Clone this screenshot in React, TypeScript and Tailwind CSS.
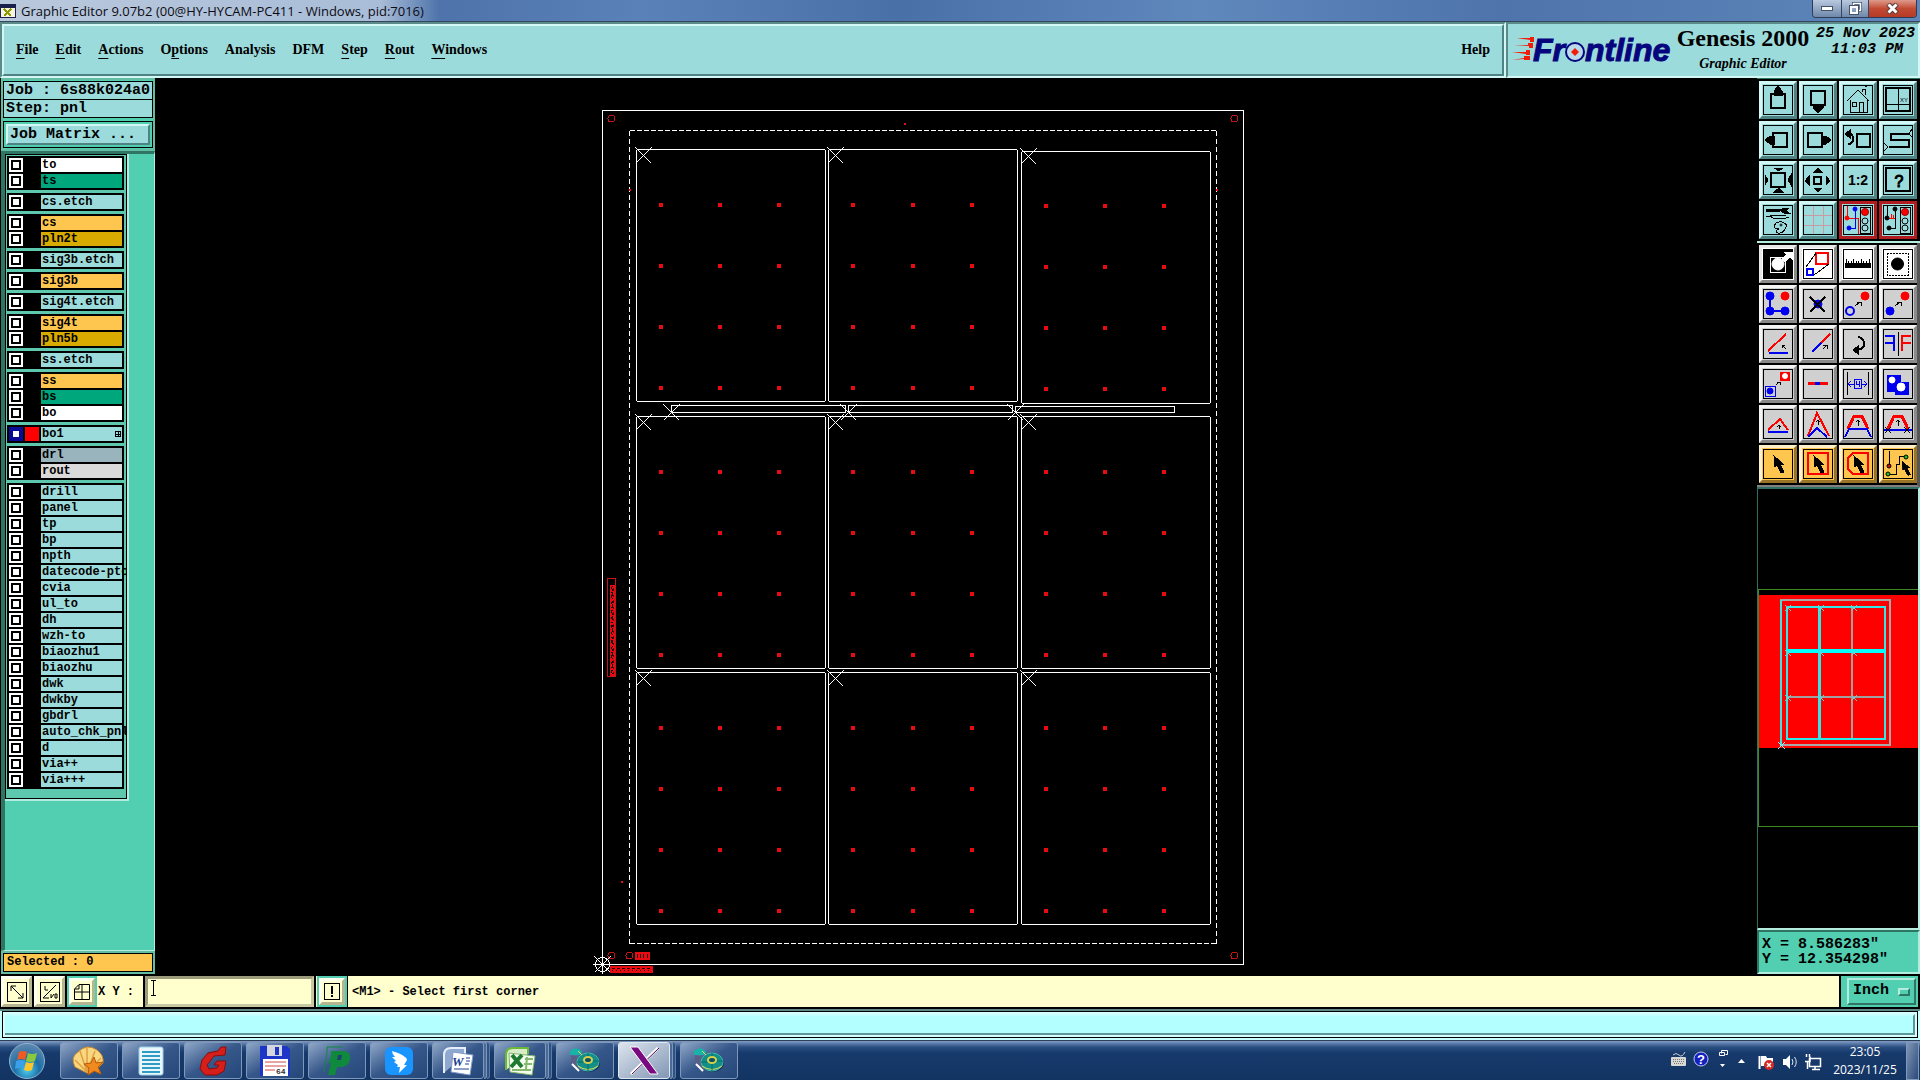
import type { ReactNode } from "react";

type Layer = { name: string; color: string; active?: boolean };

const aqua = "bg-[#9cdbdb]";
const amber = "bg-[#ffc64f]";
const gold = "bg-[#d9ab00]";
const green = "bg-[#00a67c]";

const groups: Layer[][] = [
  [{ name: "to", color: "bg-white" }, { name: "ts", color: green }],
  [{ name: "cs.etch", color: aqua }],
  [{ name: "cs", color: amber }, { name: "pln2t", color: gold }],
  [{ name: "sig3b.etch", color: aqua }],
  [{ name: "sig3b", color: amber }],
  [{ name: "sig4t.etch", color: aqua }],
  [{ name: "sig4t", color: amber }, { name: "pln5b", color: gold }],
  [{ name: "ss.etch", color: aqua }],
  [{ name: "ss", color: amber }, { name: "bs", color: green }, { name: "bo", color: "bg-white" }],
  [{ name: "bo1", color: aqua, active: true }],
  [{ name: "drl", color: "bg-[#9ab4be]" }, { name: "rout", color: "bg-[#dadada]" }],
  [
    "drill", "panel", "tp", "bp", "npth", "datecode-pto", "cvia", "ul_to", "dh", "wzh-to", "biaozhu1",
    "biaozhu", "dwk", "dwkby", "gbdrl", "auto_chk_pnl", "d", "via++", "via+++",
  ].map((name) => ({ name, color: aqua })),
];

// [before, underlined, after]
const menus = [
  ["", "F", "ile"], ["", "E", "dit"], ["", "A", "ctions"], ["O", "p", "tions"], ["Analysis", "", ""],
  ["DFM", "", ""], ["", "S", "tep"], ["", "R", "out"], ["", "W", "indows"],
];

const mono = "font-['Liberation_Mono',monospace] font-bold";
const serif = "font-['Liberation_Serif',serif] font-bold";
const raised = "border-t-[#d3f7f4] border-l-[#d3f7f4] border-b-[#4f8283] border-r-[#4f8283]";
const sunken = "border-t-[#5b8a8a] border-l-[#5b8a8a] border-b-[#d3f7f4] border-r-[#d3f7f4]";

const TitleBar = () => (
  <div className="h-[22px] shrink-0 flex items-center border-b border-[#33465c] bg-[linear-gradient(90deg,#b9c8dc_0,#a9bdd8_380px,#4d73aa_440px,#5b82b8_640px,#4a70a8_900px,#5f88bd_1200px,#4e74ab_1500px,#5f87bb_100%)]">
    <svg width="16" height="16" viewBox="0 0 16 16" shapeRendering="crispEdges">
      <rect x="0" y="1" width="16" height="14" fill="#1b1f4b" />
      <rect x="1" y="5" width="14" height="9" fill="#f4f4e0" />
      <path d="M4 6l7 7M11 6l-7 7" stroke="#8f9a00" strokeWidth="2" />
    </svg>
    <h1 className="ml-[5px] flex-1 text-[13px] leading-[20px] text-[#0c0c14] font-['Open_Sans',sans-serif]">
      Graphic Editor 9.07b2 (00@HY-HYCAM-PC411 - Windows, pid:7016)
    </h1>
    <div className="mr-[3px] self-start flex h-[18px] rounded-b border border-t-0 border-[#2c3c55] overflow-hidden">
      <button aria-label="Minimize" className="w-[29px] flex justify-center items-center border-r border-[#33455f] bg-linear-to-b from-[#b9c9de] to-[#7088aa]">
        <svg width="13" height="6"><rect x=".5" y=".5" width="11" height="4" fill="#fff" stroke="#42526b" /></svg>
      </button>
      <button aria-label="Restore" className="w-[27px] flex justify-center items-center border-r border-[#33455f] bg-linear-to-b from-[#b9c9de] to-[#7088aa]">
        <svg width="13" height="13" fill="none">
          <path d="M4.5 4V1.500h7v7H9" stroke="#42526b" strokeWidth="3" />
          <path d="M4.500 4V1.500h7v7H9" stroke="#fff" strokeWidth="1.500" />
          <rect x="1.500" y="4.500" width="7" height="7" stroke="#42526b" strokeWidth="3" />
          <rect x="2" y="5" width="6" height="6" stroke="#fff" strokeWidth="2" />
        </svg>
      </button>
      <button aria-label="Close" className="w-[47px] flex justify-center items-center bg-linear-to-b from-[#dd9a8c] via-[#c24a33] to-[#b63a26]">
        <svg width="13" height="11">
          <path d="M2 1l9 9M11 1l-9 9" stroke="#5b3a3a" strokeWidth="5" />
          <path d="M2.500 1.500l8 8M10.500 1.500l-8 8" stroke="#fff" strokeWidth="3" />
        </svg>
      </button>
    </div>
  </div>
);

const FrontlineLogo = () => (
  <svg width="163" height="42" viewBox="0 -6 163 42" role="img" aria-label="Frontline">
    <path
      fill="#f21c08"
      d="M5 2h13v-1h4v5h-4v-2zM2 9h14v-2h5v5h-4v-2zM0 16h14v-2h4v5h-4v-1zM0 24l12-2v-2h6v4h-6v-1z"
    />
    <g fontFamily="Liberation Sans" fontWeight="bold" fontStyle="italic" fontSize="32" fill="#06057e" stroke="#06057e">
      <text x="21" y="25">Fr</text>
      <text x="73" y="25">ntline</text>
    </g>
    <circle cx="63" cy="16" r="9" fill="#b9dbe9" stroke="#06057e" strokeWidth="2" />
    <path d="M63 12l4 4-4 4-4-4z" fill="#f21c08" />
  </svg>
);

const Header = () => (
  <header className="h-[56px] shrink-0 flex">
    <div className={`flex-1 flex border-2 ${sunken}`}>
      <nav className={`flex-1 flex items-center justify-between pl-[12px] pr-[12px] pb-[2px] bg-[#9cdbdb] border-2 text-[14px] ${serif} ${raised}`}>
        <div className="flex gap-[17px]">
          {menus.map(([a, u, b]) => (
            <button key={a + u + b}>
              {a}
              <span className="underline underline-offset-4">{u}</span>
              {b}
            </button>
          ))}
        </div>
        <button>Help</button>
      </nav>
    </div>
    <div className={`w-[414px] flex bg-[#9cdbdb] border-2 ${sunken}`}>
      <div className="pl-[4px] pt-[6px]"><FrontlineLogo /></div>
      <div className={`w-[136px] text-center whitespace-nowrap ${serif}`}>
        <div className="text-[24px] leading-[28px]">Genesis 2000</div>
        <div className="text-[14px] leading-[24px] italic">Graphic Editor</div>
      </div>
      <div className={`ml-[5px] text-[15px] leading-[16px] pt-[2px] italic text-right whitespace-nowrap ${mono}`}>
        <div>25 Nov 2023</div>
        <div className="pr-[12px]">11:03 PM</div>
      </div>
    </div>
  </header>
);

const LayerRow = ({ name, color, active }: Layer) => (
  <div className="flex h-[14px]">
    <input
      id={name}
      type="checkbox"
      className={
        active
          ? "appearance-none shrink-0 size-[14px] bg-white border-2 border-[#0a0a96] shadow-[inset_0_0_0_2px_#0a0a96]"
          : "appearance-none shrink-0 size-[14px] bg-white border-2 border-white shadow-[inset_0_0_0_2px_#000]"
      }
    />
    <span className={active ? "w-[14px] mx-[2px] bg-[#f00]" : "w-[14px] mx-[2px] bg-black"} />
    <label htmlFor={name} className={`flex-1 min-w-0 flex items-center justify-between pl-px whitespace-nowrap text-[12px] leading-[14px] ${mono} ${color}`}>
      {name}
      {active && (
        <svg width="6" height="6" className="mr-px shrink-0" shapeRendering="crispEdges">
          <path d="M0 .5h6M0 3h6M0 5.500h6M.5 0v6M3 0v6M5.500 0v6" stroke="#000" />
        </svg>
      )}
    </label>
  </div>
);

const LeftPanel = () => (
  <aside className="w-[155px] shrink-0 flex flex-col bg-[#52ceb0] border-l border-black mb-[2px]">
    <div className="border-2 border-[#62bda3] py-px">
      <div className={`text-[15px] ${mono}`}>
        <div className="h-[19px] leading-[18px] pl-[2px] border border-black bg-[#9cdbdb] whitespace-nowrap">Job : 6s88k024a0</div>
        <div className="h-[18px] leading-[18px] pl-[2px] border border-t-0 border-black bg-[#9cdbdb]">Step: pnl</div>
        <div className="mt-[3px] p-[2px] border border-black">
          <button className={`block w-full h-[21px] leading-[17px] pl-[2px] text-left border-2 bg-[#9cdbdb] ${raised}`}>Job Matrix ...</button>
        </div>
      </div>
    </div>
    <div className="flex-1 border-t-3 border-t-[#2f7563] border-l-4 border-l-[#2f7563] border-r border-r-[#b4ede0] border-b border-b-[#b4ede0]">
      <div className="w-[124px] border-r-2 border-b-2 border-[#b4ede0]">
        <div className="border border-black p-px pb-[9px] flex flex-col gap-[3px] bg-[#5dc8ad] overflow-hidden">
          {groups.map((group) => (
            <div key={group[0].name} className="w-[117px] p-[2px] bg-black flex flex-col gap-[2px]">
              {group.map((layer) => (
                <LayerRow key={layer.name} {...layer} />
              ))}
            </div>
          ))}
        </div>
      </div>
    </div>
    <div className="border-2 border-[#62bda3]">
      <div className={`h-[19px] leading-[17px] pl-[3px] text-[12px] border border-black bg-[#ffc64f] ${mono}`}>Selected : 0</div>
    </div>
  </aside>
);

// Board geometry
const columns = [
  { x: 636.5, cross: 643.5, dots: [661, 720, 779] },
  { x: 828.5, cross: 835.5, dots: [853, 913, 972] },
  { x: 1021.5, cross: 1028.5, dots: [1046, 1105, 1164] },
];
const rows = [
  { y: 149.5, cross: 155.5, dots: 205 },
  { y: 416.5, cross: 422.5, dots: 472 },
  { y: 672.5, cross: 678.5, dots: 728 },
];
const strips = [
  { x: 671.5, y: 405.5, w: 174, h: 7 },
  { x: 848.5, y: 405.5, w: 164, h: 7 },
  { x: 1015.5, y: 406.5, w: 159, h: 6 },
];

const Cross = ({ x, y }: { x: number; y: number }) => (
  <path d={`M${x - 8} ${y - 8}l16 16m0 -16l-16 16`} stroke="#fff" />
);

const Board = () => (
  <svg className="flex-1 min-w-0 bg-black" viewBox="155 78 1602 898" shapeRendering="crispEdges" fill="none">
    <rect x="602.5" y="110.5" width="641" height="854" stroke="#fff" />
    <path d="M629.5 130.500H1216.500M629.500 943.500H1216.500" stroke="#fff" strokeDasharray="5 2" />
    <path d="M629.5 130.500V943.500M1216.500 130.500V943.500" stroke="#fff" strokeDasharray="5 3" />
    {rows.map((row, r) =>
      columns.map((col, c) => {
        const dy = r === 0 && c === 2 ? 2 : 0;
        return (
          <g key={`${r}-${c}`}>
            <rect x={col.x} y={row.y + dy} width="189" height="252" rx="2" stroke="#fff" />
            <Cross x={col.cross} y={row.cross + dy / 2} />
            {col.dots.map((x) =>
              [0, 61, 122, 183].map((d) => (
                <rect key={`${x}-${d}`} x={x - 2} y={row.dots + d - 2 + dy / 2} width="4" height="4" fill="#e80c12" />
              ))
            )}
          </g>
        );
      })
    )}
    {strips.map((s) => (
      <g key={s.x}>
        <rect x={s.x} y={s.y} width={s.w} height={s.h} stroke="#fff" />
        <Cross x={s.x} y={412.5} />
      </g>
    ))}
    <g stroke="#c81414">
      {[[611.5, 118.500], [1234.500, 118.500], [611.500, 955.500], [629.500, 955.500], [1234.500, 955.500]].map(([x, y]) => (
        <circle key={`${x}-${y}`} cx={x} cy={y} r="3.5" />
      ))}
      <rect x="607.5" y="578.500" width="8" height="98" />
    </g>
    <g fill="#e80c12">
      <rect x="904" y="123" width="2" height="2" />
      <rect x="629" y="189" width="2" height="2" />
      <rect x="1216" y="189" width="2" height="2" />
      <rect x="621" y="881" width="2" height="2" />
      <rect x="610" y="585" width="5" height="91" />
      <rect x="635" y="952" width="15" height="8" />
      <rect x="610" y="966" width="43" height="7" />
    </g>
    <path d="M611.500 587V674" stroke="#000" strokeDasharray="2 3 1 2 3 4" />
    <path d="M612.500 586V674" stroke="#000" strokeDasharray="1 2 2 1 4 2" />
    <path d="M613.500 588V674" stroke="#5a0000" strokeDasharray="3 4 2 3" />
    <path d="M637.500 954v4M640.500 954v4M643.500 954v4M647.500 954v4" stroke="#200" />
    <path d="M612 968.500H652" stroke="#200" strokeDasharray="3 2" />
    <path d="M612 970.500H652" stroke="#200" strokeDasharray="1 3" />
    <path d="M592.500 964.500h20M602.500 955v19" stroke="#fff" />
    <Cross x={602.5} y={964.5} />
    <circle cx="602.5" cy="964.500" r="7" stroke="#fff" />
  </svg>
);

const sq = (x: number, y: number, s: number) => <rect x={x} y={y} width={s} height={s} strokeWidth="2" />;
const red = "#f00";
const blue = "#0000f0";
const pointer = "M0 0l1 11 2-2 4 8 3-1-4-8h3z";
const lights = (
  <>
    <rect x="17" y="2" width="10" height="26" />
    <circle cx="22" cy="7" r="3.5" fill={red} stroke="#900" />
    <circle cx="22" cy="16" r="3" />
    <circle cx="22" cy="23" r="3" />
  </>
);

const viewTools: [string, ReactNode][] = [
  ["Pan up", <>{sq(8, 9, 14)}<path d="M15 1l-4 5v4h8V6z" fill="#000" /></>],
  ["Pan down", <>{sq(8, 6, 14)}<path d="M15 28l-5-5v-4h10v4z" fill="#000" /></>],
  ["Home", <><path d="M4 16L15 5l11 11M7 15v12h17V15M19 7V4h3v6M22 2l2-1M16 27V17h4v10" /><rect x="9" y="17" width="4" height="4" /></>],
  ["Zoom window", <><rect x="3" y="3" width="24" height="23" strokeWidth="2" /><path d="M15 3v23M3 19h24" /><text x="17" y="17" fontSize="6" fill="#000" stroke="none" fontFamily="Liberation Sans">XY</text></>],
  ["Pan left", <>{sq(10, 8, 14)}<path d="M2 15l5-4h4v8H7z" fill="#000" /></>],
  ["Pan right", <>{sq(5, 8, 14)}<path d="M28 15l-5-4h-5v8h5z" fill="#000" /></>],
  ["Previous view", <>{sq(14, 9, 13)}<path d="M4 9h3q3 0 3 5t-5 5" strokeWidth="2" /><path d="M2 9l5-4v8z" fill="#000" /></>],
  ["Serpentine", <><path d="M26 9H8v6h18v7H6" strokeWidth="2" /><path d="M29 4l-3 5 3 3M1 18l4 4-4 4" /></>],
  ["Zoom out", <>{sq(8, 8, 14)}<path d="M11 3h9l-4 3zM11 27h9l-4-4zM2 10v10l3-5zM28 10v10l-3-5z" fill="#000" /></>],
  ["Zoom in", <>{sq(11, 12, 7)}<path d="M11 7h8l-4-4zM11 23h8l-4 4zM6 11v9l-4-4zM23 11v9l4-4z" fill="#000" /></>],
  ["Scale 1:2", <text x="15" y="20" fontSize="14" fontWeight="bold" textAnchor="middle" fill="#000" stroke="none" fontFamily="Liberation Sans">1:2</text>],
  ["Help", <><rect x="3" y="3" width="24" height="23" strokeWidth="2" /><text x="16" y="22" fontSize="16" textAnchor="middle" fill="#000" fontFamily="Liberation Sans">?</text></>],
  ["Configure", <><path d="M3 5h14" strokeWidth="3" /><path d="M26 3h-5l-4 2 4 3h5l-3-2z" fill="#000" /><path d="M3 11h4l3 2h13l3-1M7 10h16M11 22q1-6 8-5 7 2 3 7-3 5-7 4-4-2 1-4-4 0-5-2z" /><circle cx="18" cy="20" r="1" /></>],
  ["Grid", <path d="M10 1v28M20 1v28M1 10h28M1 20h28" stroke="#c99ba5" />],
  ["Net on", <><path d="M4 1v12h11v16" stroke={red} /><path d="M12 4v19H7" stroke={blue} /><circle cx="12" cy="4" r="2" fill={blue} stroke={blue} /><circle cx="6" cy="23" r="2" fill={blue} stroke={blue} /><circle cx="4" cy="13" r="2" fill={red} stroke={red} />{lights}</>],
  ["Net off", <><path d="M4 1v12M12 4v19H7" /><path d="M6 13h6M8 9v4M10 10v3" stroke={red} /><circle cx="12" cy="4" r="2" fill="#000" /><circle cx="6" cy="23" r="2" fill="#000" /><circle cx="4" cy="13" r="2" fill="#000" />{lights}</>],
];

const editTools: [string, ReactNode][] = [
  ["Invert", <><rect x="1" y="1" width="28" height="28" fill="#000" /><rect x="7" y="8" width="15" height="15" stroke="#fff" /><circle cx="15" cy="15" r="6" fill="#fff" stroke="#fff" /><path d="M19 10l5-5-3-2h8v7l-2-2-5 5z" fill="#fff" stroke="#fff" /></>],
  ["Zoom area", <><rect x="13" y="4" width="12" height="11" stroke={red} strokeWidth="2" /><rect x="4" y="20" width="6" height="6" stroke={blue} strokeWidth="2" /><path d="M3 18L13 4M11 26l15-11" /></>],
  ["Measure", <><rect x="2" y="14" width="25" height="4" fill="#000" /><path d="M3 10v5M5 12v3M8 12v3M10 10v5M13 12v3M15 12v3M18 10v5M20 12v3M23 12v3M26 10v5" /></>],
  ["Select features", <><rect x="4" y="4" width="21" height="22" strokeDasharray="2 1" /><circle cx="14.5" cy="15" r="6" fill="#000" /></>],
  ["Connect", <><path d="M7 7v15h15" stroke={blue} strokeWidth="2" /><g fill={blue} stroke={blue}><circle cx="7" cy="7" r="4" /><circle cx="7" cy="22" r="4" /><circle cx="22" cy="22" r="4" /></g><circle cx="22" cy="7" r="4" fill={red} stroke={red} /></>],
  ["Delete", <><circle cx="15" cy="15" r="4" fill={blue} stroke={blue} /><path d="M7 8l15 15M22 8L7 23" strokeWidth="2" /></>],
  ["Copy", <><circle cx="7" cy="22" r="4" stroke={blue} strokeWidth="2" /><circle cx="22" cy="7" r="4" fill={red} stroke={red} /><path d="M12 17l5-4M14 13h4v4" /></>],
  ["Move", <><circle cx="7" cy="22" r="4" fill={blue} stroke={blue} /><circle cx="22" cy="7" r="4" fill={red} stroke={red} /><path d="M12 17l5-4M14 13h4v4" /></>],
  ["Rotate line", <><path d="M5 22L23 5" stroke={red} strokeWidth="2" /><path d="M6 24h19" stroke={blue} strokeWidth="2" /><path d="M23 20l-4-4M19 19v-3h3" /></>],
  ["Stretch line", <><path d="M9 23l9-9" stroke={blue} strokeWidth="2" /><path d="M18 14l9-9" stroke={red} strokeWidth="2" /><path d="M20 20l4-4M20 16h4v4" /></>],
  ["Rotate", <><path d="M15 8q6 1 6 7 0 5-7 6" strokeWidth="2" /><path d="M15 17v8l-5-4z" fill="#000" /></>],
  ["Mirror", <><path d="M2 7h9v15M2 14h9" stroke={blue} strokeWidth="2" /><path d="M15 3v24" /><path d="M28 7h-9v15M28 14h-9" stroke={red} strokeWidth="2" /></>],
  ["Resize copy", <><rect x="17" y="3" width="9" height="8" fill={red} stroke={red} /><circle cx="22" cy="7" r="2.5" fill="#fff" stroke="#fff" /><rect x="2" y="17" width="10" height="10" stroke={blue} /><circle cx="7" cy="22" r="3" fill={blue} stroke={blue} /><path d="M13 16l3-3M14 13h3v3" /></>],
  ["Resize line", <><path d="M5 14h20" stroke={red} strokeWidth="3" /><path d="M12 14h5" stroke={blue} strokeWidth="3" /></>],
  ["Spacing", <><path d="M4 3v23M25 3v23" /><g stroke={blue}><path d="M5 15h6M8 12l-3 3 3 3M19 15h5M21 12l3 3-3 3" /><rect x="11" y="10" width="7" height="9" /><path d="M13 12v3h3M16 12v6" /></g></>],
  ["Merge", <><g fill={blue} stroke={blue}><rect x="4" y="6" width="13" height="16" /><rect x="12" y="13" width="13" height="12" /></g><circle cx="9" cy="11" r="3" fill="#fff" stroke="#fff" /><circle cx="18" cy="18" r="4" fill="#fff" stroke="#fff" /></>],
  ["Arc low", <><path d="M5 21L17 10l8 11" stroke={red} strokeWidth="2" /><path d="M5 23h20" stroke={blue} strokeWidth="2" /><path d="M16 20v-4M14 18l2-2 2 2" /></>],
  ["Arc high", <><path d="M5 27L14 4l12 23" stroke={red} strokeWidth="2" /><path d="M5 28l9-9 10 9" stroke={blue} strokeWidth="2" /><path d="M15 16v-5M13 13l2-2 2 2" /></>],
  ["Trapezoid", <><path d="M5 20l6-13h8l6 13" stroke={red} strokeWidth="3" /><path d="M2 28l4-8h18l4 8" stroke={blue} strokeWidth="2" /><path d="M15 17v-6M13 13l2-2 2 2" /></>],
  ["Trapezoid cut", <><path d="M5 20l6-13h8l6 13" stroke={red} strokeWidth="3" /><path d="M1 21h28" stroke={blue} strokeWidth="2" /><path d="M2 18l6 6M8 18l-6 6M21 18l6 6M27 18l-6 6M15 17v-6M13 13l2-2 2 2" /></>],
];

const pickTools: [string, ReactNode][] = [
  ["Pick", <path d={pointer} transform="translate(11 7)" fill="#000" />],
  ["Pick in frame", <><rect x="5" y="4" width="20" height="21" stroke={red} strokeWidth="2" /><path d={pointer} transform="translate(11 7)" fill="#000" /></>],
  ["Pick in polygon", <><path d="M10 4h15v21H10l-5-5V9z" stroke={red} strokeWidth="2" /><path d={pointer} transform="translate(11 7)" fill="#000" /></>],
  ["Pick net", <><path d="M6 2v16M6 25h7V15h3V7h8" /><circle cx="6" cy="17" r="2" fill="#c01010" /><circle cx="5" cy="25" r="2" fill="#1fc01f" /><circle cx="23" cy="8" r="2" fill="#1fc01f" /><path d={pointer} transform="translate(19 12) scale(.85)" fill="#000" /></>],
];

const toolStyles = {
  aqua: `bg-[#9cdbdb] ${raised}`,
  alert: "bg-[#9cdbdb] border-[#b01c20]",
  white: "bg-white border-t-[#e8e8e8] border-l-[#e8e8e8] border-b-[#8a8a8a] border-r-[#8a8a8a]",
  gray: "bg-[#d0d0d0] border-t-[#f4f4f4] border-l-[#f4f4f4] border-b-[#8a8a8a] border-r-[#8a8a8a]",
  amber: "bg-[#ffc64f] border-t-[#fff0cc] border-l-[#fff0cc] border-b-[#9a7426] border-r-[#9a7426]",
};

const Tool = ({ label, look, children }: { label: string; look: keyof typeof toolStyles; children: ReactNode }) => (
  <button aria-label={label} className={`size-[38px] flex justify-center items-center border-3 ${toolStyles[look]}`}>
    <svg width="30" height="30" viewBox="0 0 30 30" fill="none" stroke="#000" className="[&_circle]:[shape-rendering:geometricPrecision]">
      <rect x=".5" y=".5" width="29" height="29" shapeRendering="crispEdges" />
      <g shapeRendering="crispEdges">{children}</g>
    </svg>
  </button>
);

const Overview = () => (
  <svg className="w-full flex-1 min-h-0 bg-black" viewBox="1758 489 160 439" shapeRendering="crispEdges" fill="none">
    <rect x="1758" y="595" width="160" height="153" fill="#f00" />
    <path d="M1918 589.500H1758.500V826.500H1918" stroke="#3f8a24" />
    <rect x="1781" y="600" width="109" height="145" stroke="#a8a8a8" strokeWidth="2" />
    <path d="M1781 600v146" stroke="#3fe0e0" strokeWidth="2" />
    <path d="M1852 607v132M1787 697h98" stroke="#a0a0a0" strokeWidth="2" />
    <rect x="1787" y="607" width="98" height="132" stroke="#30e8e8" strokeWidth="2" />
    <path d="M1819.500 607v132" stroke="#30e8e8" strokeWidth="3" />
    <path d="M1786 651h100" stroke="#0ff" strokeWidth="4" />
    {[1788, 1821, 1854].map((x) =>
      [608, 653, 698].map((y) => <path key={`${x}-${y}`} d={`M${x - 3} ${y - 3}l6 6m0 -6l-6 6`} stroke="#6fd0d0" />)
    )}
    <path d="M1778 742l7 7m0-7l-7 7" stroke="#8ff" />
  </svg>
);

const RightPanel = () => (
  <aside className="w-[163px] shrink-0 flex flex-col mb-[2px] bg-black">
    <div className="pl-[2px] pt-[2px] pb-[2px] border-t border-t-[#2f7563] border-b-2 border-b-[#b4ede0] grid grid-cols-[repeat(4,38px)] gap-[2px]">
      {viewTools.map(([label, icon]) => (
        <Tool key={label} label={label} look={label.startsWith("Net") ? "alert" : "aqua"}>{icon}</Tool>
      ))}
    </div>
    <div className="pl-[2px] pt-[2px] pb-[2px] border-b-2 border-b-[#808080] border-r-3 border-r-[#555] grid grid-cols-[repeat(4,38px)] gap-[2px]">
      {editTools.map(([label, icon], i) => (
        <Tool key={label} label={label} look={i < 4 ? "white" : "gray"}>{icon}</Tool>
      ))}
      {pickTools.map(([label, icon]) => (
        <Tool key={label} label={label} look="amber">{icon}</Tool>
      ))}
    </div>
    <div className="flex-1 min-h-0 flex border-t-2 border-l border-t-[#2f6f64] border-l-[#2f6f64] border-r-2 border-b-2 border-r-[#b4ede0] border-b-[#b4ede0]">
      <Overview />
    </div>
    <div className={`h-[44px] pl-[3px] pt-[5px] whitespace-pre border-2 border-l-[#2f7563] border-t-[#2f7563] border-b-[#b4ede0] border-r-[#b4ede0] bg-[#52ceb0] text-[15px] leading-[15px] ${mono}`}>
      <div>X = 8.586283"</div>
      <div>Y = 12.354298"</div>
    </div>
  </aside>
);

const barButton = "size-[31px] flex items-center justify-center border-3";
const creamBevel = "bg-[#ffffce] border-t-[#fffff0] border-l-[#fffff0] border-b-[#b5b592] border-r-[#b5b592]";

const CommandBar = () => (
  <div className={`h-[31px] shrink-0 flex items-center bg-[#ffffce] text-[12px] ${mono}`}>
    <div className="flex gap-[2px] bg-black pl-px">
      <button aria-label="Snap corner" className={`${barButton} ${creamBevel}`}>
        <svg width="20" height="20" fill="none" stroke="#000"><rect x=".5" y=".5" width="19" height="19" /><path d="M4 4l12 12M4 9V4h5M16 11v5h-5" /></svg>
      </button>
      <button aria-label="Snap angle" className={`${barButton} ${creamBevel}`}>
        <svg width="20" height="20" fill="none" stroke="#000"><rect x=".5" y=".5" width="19" height="19" /><path d="M3 16L16 3M3 16h6M5 4v4h3M11 12v4M11 16l3-4M15 12h2v4h-2z" /></svg>
      </button>
      <div className="p-[2px] w-[30px] bg-[#52ceb0]">
        <button aria-label="Grid" className={`w-[26px] h-[27px] flex items-center justify-center border-3 ${creamBevel}`}>
          <svg width="16" height="16" fill="none" stroke="#000"><path d="M5 .5h10.500v15H.5V5zM8 1v14M1 8h14M5 1v4H1" /></svg>
        </button>
      </div>
    </div>
    <label htmlFor="xy" className="w-[46px] pl-px whitespace-pre">X Y :</label>
    <div className="w-[173px] h-full bg-black px-[2px]">
      <input id="xy" className="block w-full h-full px-[6px] outline-none border-3 bg-[#ffffce] border-t-[#9c9c7c] border-l-[#9c9c7c] border-b-[#c8c8a4] border-r-[#c8c8a4]" />
      {/* text cursor */}
      <svg width="7" height="16" className="absolute -mt-[27px] ml-[5px]" fill="none" stroke="#000" shapeRendering="crispEdges">
        <path d="M1 .5h5M1 15.500h5M3.500 1v14" />
      </svg>
    </div>
    <div className="ml-px w-[30px] h-full p-[2px] bg-[#52ceb0]">
      <button aria-label="Abort" className={`w-full h-full flex items-center justify-center border-3 ${creamBevel}`}>
        <svg width="16" height="17" fill="none" stroke="#000"><rect x=".5" y=".5" width="15" height="16" /><path d="M8 3v8M8 12v2" strokeWidth="2" /></svg>
      </button>
    </div>
    <div className="w-px h-full bg-black" />
    <p className="flex-1 pl-[4px]">&lt;M1&gt; - Select first corner</p>
    <div className="h-full w-[81px] p-[2px] pl-[6px] border-l-2 border-r-2 border-black bg-[#52ceb0] text-[15px]">
      <label className="h-full flex items-center justify-between pl-[4px] pr-[4px] border-2 border-t-[#b4ede0] border-l-[#b4ede0] border-b-[#2f7563] border-r-[#2f7563]">
        <select aria-label="Units" className="appearance-none outline-none bg-transparent w-[38px]">
          <option>Inch</option>
          <option>mm</option>
        </select>
        <span className="w-[12px] h-[8px] border-2 border-t-[#b4ede0] border-l-[#b4ede0] border-b-[#2f7563] border-r-[#2f7563]" />
      </label>
    </div>
  </div>
);

const Tape = () => (
  <svg width="34" height="30" viewBox="0 0 34 30">
    <path d="M3 9v8l8 8 6-12z" fill="#5b5f86" />
    <path d="M4 18l7 7" stroke="#fff" strokeWidth="2" />
    <path d="M2 5q7-6 12 1l-2 3H2z" fill="#17b3a6" />
    <ellipse cx="21" cy="17" rx="11" ry="9" fill="#1c2b55" />
    <ellipse cx="20" cy="16" rx="11" ry="9" fill="#128f88" stroke="#3fb8aa" />
    <path d="M10 20q10 7 20 0M14 9l-4-4" stroke="#d8e05a" fill="none" />
    <path d="M20 7v5M20 18v7M9 16h6M25 15h6" stroke="#0c6a70" />
    <ellipse cx="20" cy="14" rx="4" ry="3" fill="#0c4f60" stroke="#d8d04a" strokeWidth="2" />
  </svg>
);

const taskIcons: { label: string; icon: ReactNode; stacked?: boolean; active?: boolean }[] = [
  {
    label: "Shell",
    icon: (
      <svg width="34" height="32" viewBox="0 0 34 32">
        <path d="M15 28L3 22Q-2 12 6 7 15-2 25 5q7 5 6 13l-6 6-6 4z" fill="#f9d680" stroke="#c98a2a" />
        <path d="M15 27L3 15M15 27L8 6M15 27L15 3M15 27l8-21M15 27l14-14" stroke="#e0a040" strokeWidth="1.500" />
        <path d="M22 12l2 6 7-1-5 5 3 7-7-3-6 4 1-7-5-4 7-1z" fill="#f18a1e" stroke="#b85a08" />
      </svg>
    ),
  },
  {
    label: "Notepad",
    icon: (
      <svg width="26" height="30" viewBox="0 0 26 30">
        <rect x="1" y="1" width="24" height="28" rx="2" fill="#e9f7fd" stroke="#9bd0e6" />
        <path d="M4 6h18M4 10h18M4 14h18M4 18h18M4 22h18M4 26h18" stroke="#2f9cc4" strokeWidth="2" />
      </svg>
    ),
  },
  {
    label: "Genesis",
    icon: (
      <svg width="30" height="30" viewBox="0 0 30 30">
        <path d="M28 1l-1 8-11 1-7 9 2 4 8-1 2-3h-5l3-4h9l-2 10-7 4H7l-5-6 2-9 6-7 10-2 3-4z" fill="#d61f1a" stroke="#8a0d0d" />
      </svg>
    ),
  },
  {
    label: "Floppy",
    icon: (
      <svg width="32" height="32" viewBox="0 0 32 32">
        <path d="M1 1h27l3 3v27H1z" fill="#1e36c8" />
        <rect x="8" y="0" width="15" height="11" fill="#d4d7de" />
        <rect x="16" y="2" width="4" height="8" fill="#1e36c8" />
        <rect x="4" y="14" width="25" height="17" fill="#fff" />
        <path d="M6 17h21M6 21h21M6 25h10" stroke="#d04848" />
        <text x="17" y="29" fontSize="8" fontWeight="bold" fontFamily="Liberation Mono" fill="#333">64</text>
      </svg>
    ),
  },
  {
    label: "Planner",
    icon: (
      <svg width="30" height="30" viewBox="0 0 30 30">
        <path d="M5 7V1h16M5 7L2 26" stroke="#0f8a3c" fill="none" />
        <path d="M9 5h13q7 1 6 8-1 8-10 8h-3l-2 8H6l3-12H6l3-6z" fill="#0f8a3c" />
        <path d="M16 9h4l-1 5h-4z" fill="#1d4370" />
      </svg>
    ),
  },
  {
    label: "DingTalk",
    icon: (
      <svg width="28" height="28" viewBox="0 0 28 28">
        <rect width="28" height="28" rx="6" fill="#1a94ff" />
        <path d="M7 4q14 4 15 9l-3 5h3l-8 8 1-6h-3l1-2-4-3 2-1-4-4 3 0q-3-3-3-6z" fill="#fff" />
      </svg>
    ),
  },
  {
    label: "Word",
    stacked: true,
    icon: (
      <svg width="32" height="30" viewBox="0 0 32 30">
        <path d="M2 27V9q0-7 7-7h14v6" fill="#8fa8d0" stroke="#e6eefa" strokeWidth="2" />
        <path d="M11 6l20 3-3 20-19-3z" fill="#fff" stroke="#7f9ac8" />
        <text x="10" y="20" fontSize="13" fontWeight="bold" fontStyle="italic" fontFamily="Liberation Serif" fill="#1c3f94">W</text>
        <path d="M24 12h4M24 15h4M23 18h4M12 23h15" stroke="#1c3f94" />
      </svg>
    ),
  },
  {
    label: "Excel",
    stacked: true,
    icon: (
      <svg width="32" height="30" viewBox="0 0 32 30">
        <path d="M2 24V9q0-7 7-7h15v6" fill="#d8ecc8" stroke="#6cb83a" strokeWidth="2" />
        <path d="M5 7l26 3-3 19-22-3z" fill="#f4fbf0" stroke="#84b86a" />
        <path d="M8 9l10 12M18 9L7 21" stroke="#1e7a2e" strokeWidth="4" />
        <path d="M21 13h8M20 18h8M8 24h19M22 23l1-12" stroke="#84b86a" strokeWidth="2" />
      </svg>
    ),
  },
  { label: "Genesis toolkit", icon: <Tape /> },
  {
    label: "X server",
    stacked: true,
    active: true,
    icon: (
      <svg width="32" height="30" viewBox="0 0 32 30">
        <path d="M30 2L3 28" stroke="#fff" strokeWidth="3" />
        <path d="M31 2L4 28" stroke="#4a0a50" />
        <path d="M2 1h8l20 27h-8z" fill="#7a0a80" stroke="#fff" />
      </svg>
    ),
  },
  { label: "Genesis editor", icon: <Tape /> },
];

const Taskbar = () => (
  <footer className="h-[40px] shrink-0 flex items-stretch border-t border-[#2d4058] bg-[linear-gradient(180deg,#7f9cc4_0,#2c4f83_6px,#173a6c_12px,#123463_100%)] text-white">
    <button aria-label="Start" className="w-[60px] flex items-center pl-[8px]">
      <svg width="38" height="38" viewBox="0 0 38 38">
        <defs>
          <radialGradient id="orb" cx="50%" cy="75%" r="70%">
            <stop offset="0" stopColor="#4fd0f0" />
            <stop offset=".5" stopColor="#1c6fa8" />
            <stop offset="1" stopColor="#5b86ae" />
          </radialGradient>
        </defs>
        <circle cx="19" cy="19" r="17.500" fill="url(#orb)" stroke="#8fb4d0" />
        <path d="M11 10q4-2 8 0l-2 8q-4-2-8 0z" fill="#ee5a24" />
        <path d="M20 11q4 2 9 0l-2 8q-5 2-9 0z" fill="#8cc83c" />
        <path d="M8 19q5-2 9 0l-2 8q-4-2-8 0z" fill="#3aa0ea" />
        <path d="M18 20q4 2 8 0l-2 8q-4 2-8 0z" fill="#fcc62c" />
      </svg>
    </button>
    <div className="flex gap-[4px] py-px">
      {taskIcons.map(({ label, icon, stacked, active }) => (
        <div key={label} className="w-[58px] flex">
          <button
            aria-label={label}
            className={
              active
                ? "flex-1 flex justify-center items-center rounded-[3px] border border-[#dfe7f0] bg-linear-to-br from-[#dde5ee] to-[#8297b4]"
                : "flex-1 flex justify-center items-center rounded-[3px] border border-[#7f97b8] bg-linear-to-br from-[#90a8c8] via-[#36578a] to-[#24477a]"
            }
          >
            {icon}
          </button>
          {stacked && (
            <>
              <span className="w-[3px] rounded-r border border-l-0 border-[#7f97b8] bg-[#4a6a98]" />
              <span className="w-[3px] rounded-r border border-l-0 border-[#5f7aa0] bg-[#2f5285]" />
            </>
          )}
        </div>
      ))}
    </div>
    <div className="flex-1" />
    <div className="flex items-center">
      <svg width="154" height="24" viewBox="0 0 154 24" fill="none">
        <path d="M3 6q3-3 6 0t6-3" stroke="#c8ccd0" />
        <rect x="1" y="8" width="15" height="9" rx="1" fill="#d8d8d4" />
        <path d="M3 10.500h11M3 12.500h11M4 14.500h9" stroke="#777" strokeDasharray="1 1" />
        <circle cx="31" cy="10" r="7" fill="#1420c0" stroke="#c0c8e8" />
        <text x="31" y="15" fontSize="13" fontWeight="bold" textAnchor="middle" fontFamily="Liberation Sans" fill="#fff">?</text>
        <path d="M51.500 4.500v-3h6v4h-2M49.500 3.500h5v3h-5z" stroke="#fff" />
        <path d="M50 15h5l-2.500 3zM68 14h7l-3.500-4z" fill="#fff" />
        <path d="M89.500 7v13" stroke="#fff" strokeWidth="2" />
        <path d="M91 7h5l1 2h6v8H91z" fill="#fff" />
        <circle cx="99" cy="16" r="5" fill="#d42a20" />
        <path d="M97 14l4 4M101 14l-4 4" stroke="#fff" strokeWidth="1.500" />
        <path d="M113 10h3l4-4v14l-4-4h-3z" fill="#fff" />
        <path d="M122 10q2 3 0 6M124.500 8q3.500 5 0 10" stroke="#dfe8f4" />
        <path d="M139.500 9.500h11v8h-11zM142 20.500h8M145 18v2M135 12.500h5v-5M136.500 5v3M139.500 5v3M137.500 12v8" stroke="#fff" strokeWidth="1.500" />
      </svg>
      <div className="w-[82px] text-center text-[12px] leading-[18px] font-['Open_Sans',sans-serif]">
        <div>23:05</div>
        <div>2023/11/25</div>
      </div>
      <button aria-label="Show desktop" className="mr-px w-[13px] h-[38px] border border-[#8298b8] bg-linear-to-br from-[#8097b8] to-[#2c4a78]" />
    </div>
  </footer>
);

export default function App() {
  return (
    <div className="h-screen flex flex-col overflow-hidden bg-black text-black">
      <TitleBar />
      <Header />
      <main className="flex-1 min-h-0 flex">
        <LeftPanel />
        <Board />
        <RightPanel />
      </main>
      <CommandBar />
      <div className="h-[31px] shrink-0 mt-[2px] border-t-2 border-[#5f8a8a] bg-[#c8ffff] px-[2px] pb-[2px]">
        <div className="h-[27px] border border-black bg-[#d8ffff] p-[2px]">
          <div className="h-full bg-[#b3ffff] border-t-2 border-b-2 border-r-2 border-t-[#c4ffff] border-b-[#5c9696] border-r-[#5c9696]" />
        </div>
      </div>
      <Taskbar />
    </div>
  );
}
